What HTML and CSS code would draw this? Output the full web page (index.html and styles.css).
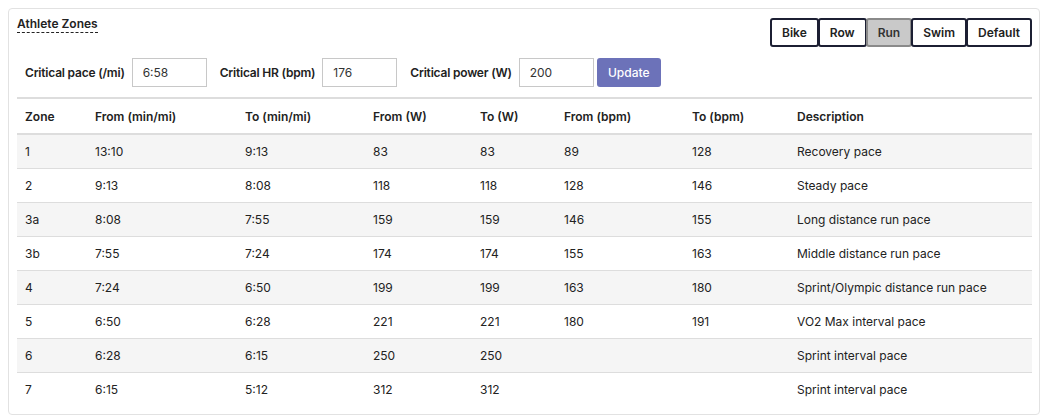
FILE: index.html
```html
<!DOCTYPE html>
<html>
<head>
<meta charset="utf-8">
<link rel="stylesheet" href="styles.css">
</head>
<body>
<div class="card">
  <div class="top">
    <span class="title">Athlete Zones</span>
    <div class="btn-group">
      <button class="sport">Bike</button>
      <button class="sport">Row</button>
      <button class="sport active">Run</button>
      <button class="sport">Swim</button>
      <button class="sport">Default</button>
    </div>
  </div>
  <div class="form">
    <label class="lbl">Critical pace (/mi)</label>
    <input class="inp" value="6:58">
    <label class="lbl">Critical HR (bpm)</label>
    <input class="inp" value="176">
    <label class="lbl">Critical power (W)</label>
    <input class="inp" value="200">
    <button class="update">Update</button>
  </div>
  <table class="zones">
    <colgroup>
      <col class="c1"><col class="c2"><col class="c3"><col class="c4"><col class="c5"><col class="c6"><col class="c7"><col class="c8">
    </colgroup>
    <thead>
      <tr><th>Zone</th><th>From (min/mi)</th><th>To (min/mi)</th><th>From (W)</th><th>To (W)</th><th>From (bpm)</th><th>To (bpm)</th><th>Description</th></tr>
    </thead>
    <tbody>
      <tr><td>1</td><td>13:10</td><td>9:13</td><td>83</td><td>83</td><td>89</td><td>128</td><td>Recovery pace</td></tr>
      <tr><td>2</td><td>9:13</td><td>8:08</td><td>118</td><td>118</td><td>128</td><td>146</td><td>Steady pace</td></tr>
      <tr><td>3a</td><td>8:08</td><td>7:55</td><td>159</td><td>159</td><td>146</td><td>155</td><td>Long distance run pace</td></tr>
      <tr><td>3b</td><td>7:55</td><td>7:24</td><td>174</td><td>174</td><td>155</td><td>163</td><td>Middle distance run pace</td></tr>
      <tr><td>4</td><td>7:24</td><td>6:50</td><td>199</td><td>199</td><td>163</td><td>180</td><td>Sprint/Olympic distance run pace</td></tr>
      <tr><td>5</td><td>6:50</td><td>6:28</td><td>221</td><td>221</td><td>180</td><td>191</td><td>VO2 Max interval pace</td></tr>
      <tr><td>6</td><td>6:28</td><td>6:15</td><td>250</td><td>250</td><td></td><td></td><td>Sprint interval pace</td></tr>
      <tr><td>7</td><td>6:15</td><td>5:12</td><td>312</td><td>312</td><td></td><td></td><td>Sprint interval pace</td></tr>
    </tbody>
  </table>
</div>
</body>
</html>
```

FILE: styles.css
```css
html, body {
  margin: 0;
  padding: 0;
  background: #ffffff;
}
body {
  padding: 8px;
  font-family: Inter, "Noto Sans", sans-serif;
  font-size: 12px;
  color: #222222;
}
.card {
  border: 1px solid #e2e2e2;
  border-radius: 4px;
  padding: 8px 7px 7px 8px;
  box-sizing: border-box;
  width: 1032px;
  height: 407px;
}
.top {
  display: flex;
  justify-content: space-between;
  align-items: flex-start;
}
.title {
  font-weight: 600;
  font-size: 12px;
  line-height: 14px;
  padding-bottom: 1px;
  border-bottom: 1px dashed #222;
}
.btn-group {
  display: flex;
  margin-top: 1px;
}
.sport {
  font-family: Inter, "Noto Sans", sans-serif;
  font-size: 12px;
  font-weight: 600;
  color: #222;
  background: #ffffff;
  border: 2px solid #1c1f33;
  border-radius: 3px;
  height: 29px;
  padding: 0 10px;
  margin-left: -1px;
  cursor: pointer;
}
.sport.active {
  background: #c9c9c9;
  border-color: #8a8a8a;
  color: #333;
}
.form {
  display: flex;
  align-items: center;
  margin-top: 11px;
  padding-left: 8px;
  height: 29px;
}
.lbl {
  font-weight: 600;
  letter-spacing: -0.2px;
  margin-right: 7px;
}
.inp {
  width: 75px;
  height: 29px;
  box-sizing: border-box;
  border: 1px solid #c8c8c8;
  border-radius: 0;
  padding: 0 10px;
  font-family: Inter, "Noto Sans", sans-serif;
  font-size: 12px;
  color: #333;
  margin-right: 13px;
}
.inp:last-of-type {
  margin-right: 3px;
}
.update {
  background: #6c72b9;
  color: #fff;
  border: none;
  border-radius: 3px;
  height: 29px;
  width: 64px;
  font-family: Inter, "Noto Sans", sans-serif;
  font-size: 12px;
  font-weight: 500;
}
.zones {
  margin-top: 10px;
  width: 1015px;
  border-collapse: collapse;
  table-layout: fixed;
}
.c1 { width: 70px; }
.c2 { width: 150px; }
.c3 { width: 128px; }
.c4 { width: 107px; }
.c5 { width: 84px; }
.c6 { width: 128px; }
.c7 { width: 105px; }
.c8 { width: 243px; }
.zones th {
  text-align: left;
  font-weight: 600;
  height: 34px;
  padding: 0 8px;
  border-top: 2px solid #dddddd;
  border-bottom: 2px solid #dddddd;
}
.zones td {
  height: 33px;
  padding: 0 8px;
  border-bottom: 1px solid #dddddd;
}
.zones tbody tr:nth-child(odd) {
  background: #f5f5f5;
}
.zones tbody tr:last-child td {
  border-bottom: none;
}
```
